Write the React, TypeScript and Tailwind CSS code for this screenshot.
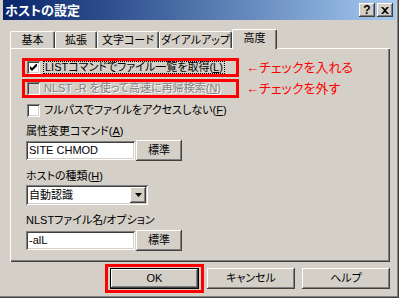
import type { ReactNode } from "react";

const raised =
  "shadow-[inset_-1px_-1px_#404040,inset_1px_1px_#ffffff,inset_-2px_-2px_#808080,inset_2px_2px_#d4d0c8]";
const sunken =
  "shadow-[inset_1px_1px_#808080,inset_-1px_-1px_#ffffff,inset_2px_2px_#404040,inset_-2px_-2px_#d4d0c8]";

function Key({ k }: { k: string }) {
  return (
    <>
      (<span className="underline underline-offset-1">{k}</span>)
    </>
  );
}

function CheckBox({ checked, disabled }: { checked?: boolean; disabled?: boolean }) {
  return (
    <div
      className={`w-[13px] h-[13px] shrink-0 flex items-center justify-center ${sunken} ${
        disabled ? "bg-[#d4d0c8]" : "bg-white"
      }`}
    >
      {checked && (
        <svg width="7" height="7" viewBox="0 0 7 7">
          <path d="M0 2 L0 5 L2 7 L7 2 L7 -1 L2 4 Z" fill="#000" />
        </svg>
      )}
    </div>
  );
}

function Tab({ label, w, active }: { label: string; w: string; active?: boolean }) {
  return (
    <div
      className={`${w} shrink-0 whitespace-nowrap flex items-center justify-center border-t border-l border-white border-r border-r-[#404040] shadow-[inset_-1px_0_#808080] rounded-tl-[2px] rounded-tr-[2px] bg-[#d4d0c8] ${
        active ? "h-[20px] relative z-10 -mb-[1px] pb-[2px]" : "h-[17px] pt-[1px]"
      }`}
    >
      {label}
    </div>
  );
}

function Btn({ children, w, cls = "" }: { children: ReactNode; w: string; cls?: string }) {
  return (
    <div className={`${w} h-[21px] shrink-0 flex items-center justify-center bg-[#d4d0c8] ${raised} ${cls}`}>
      {children}
    </div>
  );
}

function Label({ children }: { children: ReactNode }) {
  return <div className="h-[15px] flex items-center leading-none">{children}</div>;
}

function Field({ value }: { value: string }) {
  return (
    <div className="flex items-center gap-[1px]">
      <div className={`w-[109px] h-[19px] bg-white ${sunken} flex items-center pl-[3px] leading-none`}>
        {value}
      </div>
      <Btn w="w-[46px]" cls="h-[20px]">
        標準
      </Btn>
    </div>
  );
}

export default function App() {
  return (
    <div className="w-[399px] h-[298px] bg-[#d4d0c8] flex flex-col shadow-[inset_-1px_-1px_#404040,inset_-2px_-2px_#808080] text-[11px] text-black whitespace-nowrap font-['Liberation_Sans','Noto_Sans_CJK_JP',sans-serif] [font-feature-settings:'palt'] overflow-hidden">
      {/* title bar */}
      <div className="mx-[3px] w-[393px] h-[20px] bg-linear-to-r from-[#0a246a] to-[#a6caf0] flex items-center justify-between pl-[2px] pr-[3px]">
        <span className="text-white font-bold text-[13px] leading-none">ホストの設定</span>
        <div className="flex gap-[2px]">
          <div className={`w-[16px] h-[14px] bg-[#d4d0c8] ${raised} flex items-center justify-center font-bold text-[12px] leading-none`}>
            ?
          </div>
          <div className={`w-[16px] h-[14px] bg-[#d4d0c8] ${raised} flex items-center justify-center`}>
            <svg width="8" height="7" viewBox="0 0 8 7">
              <path d="M0 0 L2 0 L4 2 L6 0 L8 0 L5 3.5 L8 7 L6 7 L4 5 L2 7 L0 7 L3 3.5 Z" fill="#000" />
            </svg>
          </div>
        </div>
      </div>

      {/* tabs */}
      <div className="mt-[8px] ml-[10px] h-[20px] flex items-end text-[11px]">
        <Tab label="基本" w="w-[45px]" />
        <Tab label="拡張" w="w-[42px]" />
        <Tab label="文字コード" w="w-[62px]" />
        <Tab label="ダイアルアップ" w="w-[73px]" />
        <Tab label="高度" w="w-[45px]" active />
      </div>

      {/* panel */}
      <div className="ml-[10px] w-[380px] h-[214px] shadow-[inset_1px_1px_#ffffff,inset_-1px_-1px_#404040,inset_-2px_-2px_#808080] pl-[12px] pt-[10px] flex flex-col">
        <div className="flex items-center gap-[7px]">
          <div className="w-[217px] h-[19px] shrink-0 border-[3px] border-[#ff0000] flex items-center pl-[2px] gap-[3px]">
            <CheckBox checked />
            <span className="border border-dotted border-black px-[1px] leading-none h-[13px] flex items-center">
              LISTコマンドでファイル一覧を取得<Key k="L" />
            </span>
          </div>
          <span className="text-[#ff0000] text-[13px] leading-none">←チェックを入れる</span>
        </div>
        <div className="mt-[2px] flex items-center gap-[7px]">
          <div className="w-[217px] h-[19px] shrink-0 border-[3px] border-[#ff0000] flex items-center pl-[2px] gap-[4px]">
            <CheckBox disabled />
            <span className="text-[#808080] [text-shadow:1px_1px_#ffffff] leading-none">
              NLST -R を使って高速に再帰検索<Key k="N" />
            </span>
          </div>
          <span className="text-[#ff0000] text-[13px] leading-none">←チェックを外す</span>
        </div>
        <div className="mt-[5px] h-[15px] flex items-center gap-[4px] pl-[5px]">
          <CheckBox />
          <span className="leading-none">
            フルパスでファイルをアクセスしない<Key k="F" />
          </span>
        </div>

        <div className="pl-[4px] flex flex-col">
          <div className="mt-[6px]">
            <Label>
              属性変更コマンド<Key k="A" />
            </Label>
          </div>
          <div className="mt-[1px]">
            <Field value="SITE CHMOD" />
          </div>
          <div className="mt-[8px]">
            <Label>
              ホストの種類<Key k="H" />
            </Label>
          </div>
          <div className={`mt-[1px] w-[122px] h-[20px] bg-white ${sunken} flex items-center justify-between pl-[3px] pr-[2px]`}>
            <span className="leading-none">自動認識</span>
            <div className={`w-[16px] h-[16px] bg-[#d4d0c8] ${raised} flex items-center justify-center`}>
              <svg width="7" height="4" viewBox="0 0 7 4">
                <path d="M0 0 L7 0 L3.5 4 Z" fill="#000" />
              </svg>
            </div>
          </div>
          <div className="mt-[8px]">
            <Label>NLSTファイル名/オプション</Label>
          </div>
          <div className="mt-[2px]">
            <Field value="-alL" />
          </div>
        </div>
      </div>

      {/* buttons */}
      <div className="mt-[2px] ml-[105px] flex items-center">
        <div className="w-[99px] h-[29px] shrink-0 border-[3px] border-[#ff0000] flex items-center justify-center">
          <div className="w-[89px] h-[21px] border border-black">
            <div className={`w-full h-full flex items-center justify-center ${raised}`}>OK</div>
          </div>
        </div>
        <Btn w="w-[88px]" cls="ml-[3px]">
          キャンセル
        </Btn>
        <Btn w="w-[88px]" cls="ml-[7px]">
          ヘルプ
        </Btn>
      </div>
    </div>
  );
}
